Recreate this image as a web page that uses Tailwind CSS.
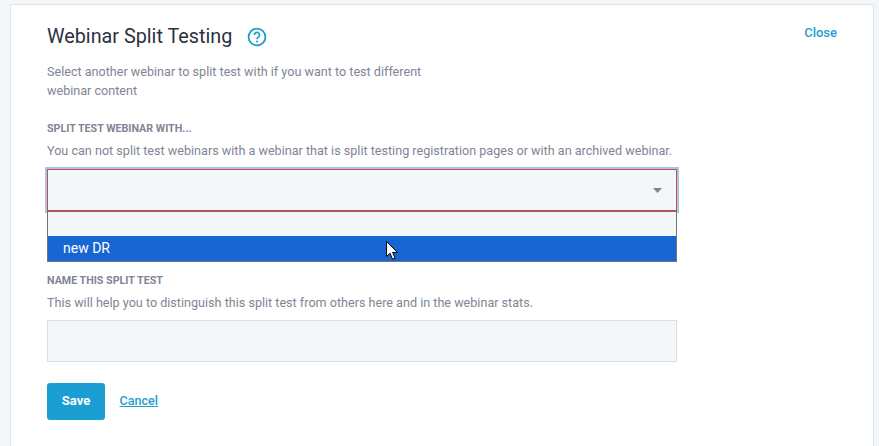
<!DOCTYPE html>
<html>
<head>
<script src="https://cdn.jsdelivr.net/npm/@tailwindcss/browser@4"></script>
</head>
<body class="bg-[#f4f7fa] font-['Roboto',sans-serif] overflow-hidden h-[446px]">
<div class="pt-1 pl-[10px] pr-[5px] h-[446px] overflow-hidden">
  <div class="relative bg-white border border-[#dde4ec] h-[500px] pl-9 pr-9 pt-[17px]">
    <a class="absolute right-[36px] top-[20px] text-[13px] leading-[16px] font-medium text-[#1b9fd2]">Close</a>
    <div class="flex items-center h-[30px]">
      <h1 class="text-[19.8px] leading-[30px] text-[#2c3140] font-normal">Webinar Split Testing</h1>
      <svg class="ml-[15px] w-5 h-5" viewBox="0 0 20 20" fill="none"><circle cx="10" cy="10" r="8.4" stroke="#1b9fd2" stroke-width="1.8"/><path d="M7.4 8a2.6 2.6 0 1 1 4.1 2.1c-.9.6-1.5 1.1-1.5 2.2" stroke="#1b9fd2" stroke-width="1.7" fill="none"/><circle cx="10" cy="14.6" r="1" fill="#1b9fd2"/></svg>
    </div>
    <p class="mt-[10px] w-[400px] text-[12.6px] leading-[19px] text-[#7f8594]">Select another webinar to split test with if you want to test different webinar content</p>
    <h2 class="mt-[22px] text-[10.7px] leading-[14px] font-bold text-[#7f8594]">SPLIT TEST WEBINAR WITH...</h2>
    <p class="mt-[6px] text-[12.6px] leading-[18px] text-[#7f8594] whitespace-nowrap">You can not split test webinars with a webinar that is split testing registration pages or with an archived webinar.</p>
    <div class="mt-[9px] w-[630px] relative">
      <div class="relative h-[42px] bg-[#f4f7fa] border-[1.5px] border-[#e2404f] shadow-[0_0_0_2px_#93d0e6] flex items-center justify-end pr-[14px]">
        <svg class="w-[9px] h-[5px]" viewBox="0 0 9 5"><path d="M0 0h9L4.5 5z" fill="#7f8594"/></svg>
      </div>
      <div class="relative border border-[#70757c] bg-[#f4f7fa] h-[51px]">
        <div class="h-[24px]"></div>
        <div class="h-[25px] bg-[#1866d4] text-white text-[14px] leading-[25px] pl-[15px]">new DR</div>
        <svg class="absolute left-[338px] top-[29px] w-[12px] h-[19px]" viewBox="0 0 12 19"><path d="M.5.5v15l3.6-3.3 2.4 6 2.6-1-2.5-5.8h5z" fill="#fff" stroke="#000" stroke-width="1"/></svg>
      </div>
    </div>
    <h2 class="mt-[12px] text-[10.7px] leading-[14px] font-bold text-[#7f8594]">NAME THIS SPLIT TEST</h2>
    <p class="mt-[6px] text-[12.6px] leading-[18px] text-[#7f8594]">This will help you to distinguish this split test from others here and in the webinar stats.</p>
    <div class="mt-[8px] w-[630px] h-[42px] bg-[#f4f7fa] border border-[#d6e0ea]"></div>
    <div class="mt-[21px] flex items-center">
      <button class="w-[58px] h-[37px] pb-[2px] rounded-[3px] bg-[#1b9fd2] text-white text-[13px] font-bold">Save</button>
      <a class="ml-[14.5px] text-[12.6px] font-medium text-[#1b9fd2] underline">Cancel</a>
    </div>
  </div>
</div>
</body>
</html>
